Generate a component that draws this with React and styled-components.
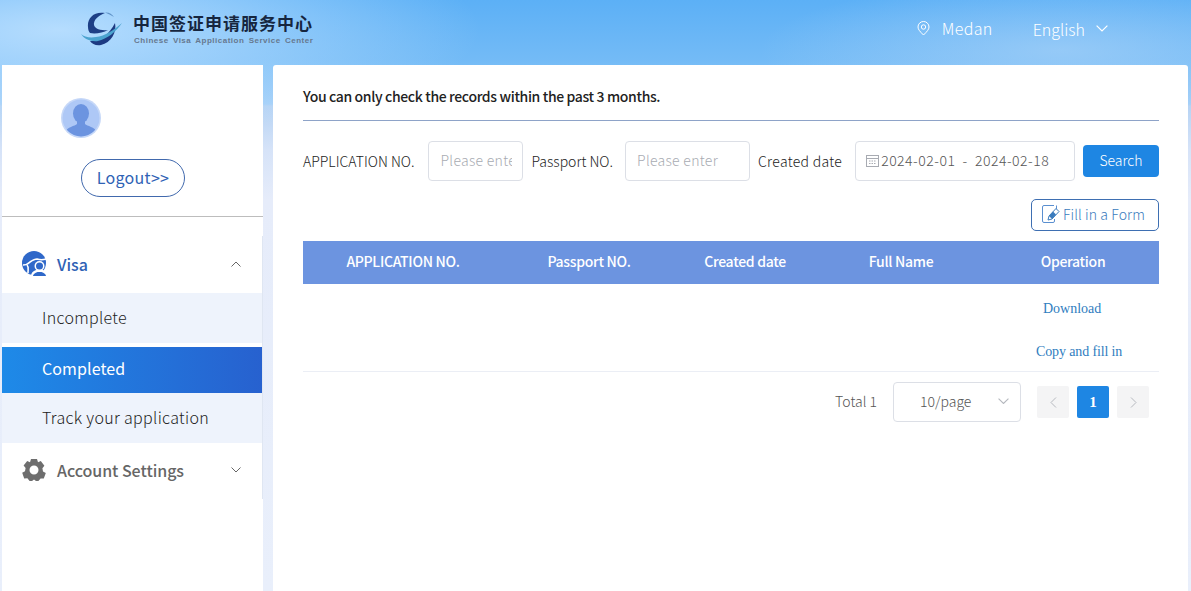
import React from 'react';
import styled, { createGlobalStyle } from 'styled-components';

const GlobalStyle = createGlobalStyle`
  html, body {
    margin: 0;
    height: 100%;
    overflow: hidden;
    font-family: "Noto Sans CJK SC", "Noto Sans", sans-serif;
  }
  * { box-sizing: border-box; }
`

const Page = styled.div`
  height: 591px;
  display: flex;
  flex-direction: column;
  background:
    radial-gradient(ellipse 300px 70px at 1060px 50px, rgba(180, 215, 248, 0.55), transparent),
    radial-gradient(ellipse 420px 110px at 60px 30px, rgba(190, 225, 255, 0.9), transparent),
    linear-gradient(180deg, #5cb0f6 0, #74bbf6 62px, #a4cff8 104px, #b6d3f4 106px, #d6e3f8 150px, #e6ecfa 200px, #e9effb 100%);
`
const Header = styled.header`
  height: 65px;
  flex: none;
  display: flex;
  align-items: center;
  justify-content: space-between;
  padding: 0 83px 7px 81px;
`
const Logo = styled.div`
  display: flex;
  align-items: center;
  gap: 10px;
`
const LogoText = styled.div`
  display: flex;
  flex-direction: column;
  margin-top: -1px;
`
const LogoTitle = styled.div`
  font-size: 17px;
  line-height: 24px;
  font-weight: 700;
  letter-spacing: 1px;
  color: #16263f;
  white-space: nowrap;
`
const LogoSub = styled.div`
  font-family: "Liberation Sans", sans-serif;
  font-size: 8px;
  line-height: 11px;
  font-weight: 700;
  letter-spacing: 0.5px;
  word-spacing: 1.6px;
  margin-left: 1px;
  color: #66788f;
  white-space: nowrap;
`
const HeaderRight = styled.div`
  display: flex;
  align-items: center;
  color: #fff;
  font-size: 16px;
  font-weight: 300;
`
const City = styled.div`
  display: flex;
  align-items: center;
  gap: 12px;
  margin-right: 40px;
  letter-spacing: 0.35px;
  margin-top: -2px;
`
const Lang = styled.div`
  display: flex;
  align-items: center;
  gap: 11px;
`
const Body = styled.div`
  flex: 1;
  display: flex;
  min-height: 0;
  padding: 0 3px 0 2px;
  gap: 10px;
`
const Sidebar = styled.aside`
  width: 261px;
  flex: none;
  background: #fff;
`
const Profile = styled.div`
  height: 152px;
  border-bottom: 1px solid #bdbdbd;
  padding: 33px 0 0 59px;
`
const Avatar = styled.div`
  width: 40px;
  height: 40px;
`
const LogoutButton = styled.button`
  display: block;
  width: 104px;
  height: 38px;
  margin: 21px 0 0 20px;
  padding: 0 0 2px;
  background: #fff;
  border: 1px solid #4169ad;
  border-radius: 19px;
  color: #2f62b5;
  font-family: inherit;
  font-size: 16px;
  font-weight: 400;
  letter-spacing: 0.3px;
`
const Menu = styled.nav`
  margin-top: 19px;
  height: 263px;
  border-right: 1px solid #dfe6f2;
`
const MenuHead = styled.div`
  height: ${p => p.$height}px;
  display: flex;
  align-items: center;
  padding: 0 21px 2px 20px;
  gap: 10px;
  color: ${p => p.$color};
  font-size: 16px;
  font-weight: 500;
  letter-spacing: -0.05px;
`
const MenuLabel = styled.span`
  flex: 1;
`
const SubMenu = styled.div`
  display: flex;
  flex-direction: column;
`
const SubItem = styled.div`
  height: ${p => p.$height}px;
  margin-top: ${p => p.$gap || 0}px;
  padding: 0 0 ${p => (p.$active ? 4 : 2)}px 40px;
  display: flex;
  align-items: center;
  font-size: 16px;
  letter-spacing: ${p => (p.$active ? 0.1 : 0.32)}px;
  font-weight: ${p => (p.$active ? 400 : 300)};
  color: ${p => (p.$active ? '#fff' : '#222')};
  background: ${p => (p.$active ? 'linear-gradient(90deg, #1e8ae8, #2761cf)' : '#eef3fc')};
`
const Main = styled.main`
  flex: 1;
  min-width: 0;
  background: #fff;
  border-radius: 3px 3px 0 0;
  padding: 0 29px 0 30px;
`
const Notice = styled.div`
  height: 56px;
  border-bottom: 1px solid #8ea3c8;
  display: flex;
  align-items: center;
  padding-top: 6px;
  font-size: 14px;
  font-weight: 500;
  color: #222;
  letter-spacing: -0.36px;
`
const SearchRow = styled.div`
  margin-top: 20px;
  height: 40px;
  display: flex;
  align-items: center;
`
const FieldLabel = styled.label`
  font-size: 14px;
  font-weight: 300;
  color: #222;
  white-space: nowrap;
  margin-right: ${p => p.$gap}px;
  letter-spacing: ${p => p.$spacing || 0}px;
`
const TextInput = styled.input`
  width: ${p => p.$width}px;
  height: 40px;
  margin-right: ${p => p.$gap}px;
  padding: 0 10px 2px 11px;
  border: 1px solid #dcdfe6;
  border-radius: 4px;
  outline: none;
  font-family: inherit;
  font-size: 14px;
  font-weight: 300;
  letter-spacing: 0.3px;
  &::placeholder { color: #a8abb2; opacity: 1; }
`
const DateInput = styled.div`
  width: 220px;
  height: 40px;
  margin-right: 8px;
  padding: 0 0 2px 10px;
  border: 1px solid #dcdfe6;
  border-radius: 4px;
  display: flex;
  align-items: center;
  gap: 2px;
  font-size: 14px;
  font-weight: 300;
  color: #555;
  letter-spacing: 0.5px;
  white-space: pre;
`
const SearchButton = styled.button`
  width: 76px;
  height: 32px;
  padding: 0 0 2px;
  border: 0;
  border-radius: 4px;
  background: #1e86e3;
  color: #fff;
  font-family: inherit;
  font-size: 14px;
  font-weight: 300;
`
const FormRow = styled.div`
  margin-top: 18px;
  display: flex;
  justify-content: flex-end;
`
const FillButton = styled.button`
  width: 128px;
  height: 32px;
  padding: 0 3px 3px 0;
  display: flex;
  align-items: center;
  justify-content: center;
  gap: 3px;
  background: #fff;
  border: 1px solid #3e6fb2;
  border-radius: 5px;
  color: #3a7bbd;
  font-family: inherit;
  font-size: 14px;
  font-weight: 300;
  letter-spacing: 0.1px;
`
const Row = styled.div`
  display: grid;
  grid-template-columns: 200px 172px 140px 172px 172px;
`
const TableHead = styled(Row)`
  margin-top: 10px;
  height: 43px;
  align-items: center;
  background: #6c94e0;
  color: #fff;
  font-size: 14px;
  font-weight: 500;
  letter-spacing: -0.3px;
  text-align: center;
  padding-bottom: 4px;
`
const TableRow = styled(Row)`
  height: 88px;
  border-bottom: 1px solid #ebeef5;
`
const Operation = styled.div`
  grid-column: 5;
  display: flex;
  flex-direction: column;
`
const OpLink = styled.a`
  font-family: "Liberation Serif", serif;
  font-size: 14px;
  line-height: 18px;
  letter-spacing: ${p => p.$spacing || 0}px;
  color: #2f7dc0;
  white-space: nowrap;
  margin-top: ${p => p.$top}px;
  margin-left: ${p => p.$left}px;
`
const Pager = styled.div`
  margin-top: 10px;
  padding-right: 10px;
  display: flex;
  align-items: center;
  justify-content: flex-end;
`
const Total = styled.span`
  font-size: 14px;
  font-weight: 300;
  color: #555;
  margin-right: 16px;
  padding-bottom: 2px;
`
const PageSize = styled.div`
  width: 128px;
  height: 40px;
  margin-right: 16px;
  padding: 0 11px 2px 26px;
  border: 1px solid #dcdfe6;
  border-radius: 4px;
  display: flex;
  align-items: center;
  justify-content: space-between;
  font-size: 14px;
  font-weight: 300;
  color: #555;
`
const PageButton = styled.button`
  width: 32px;
  height: 32px;
  margin-left: ${p => p.$gap || 0}px;
  padding: 0;
  border: 0;
  border-radius: 2px;
  display: flex;
  align-items: center;
  justify-content: center;
  background: ${p => (p.$active ? '#1e86e3' : '#f4f4f5')};
  color: #fff;
  font-family: "Liberation Serif", serif;
  font-size: 15px;
  font-weight: 700;
`

const Chevron = ({ up, size = 10, color = '#666' }) => (
  <svg width={size} height={size * 0.6} viewBox="0 0 10 6" fill="none" stroke={color} strokeWidth="1">
    <path d={up ? 'M0.5 5.5L5 1l4.5 4.5' : 'M0.5 0.5L5 5l4.5-4.5'} />
  </svg>
)

const LogoMark = () => (
  <svg width="42" height="34" viewBox="0 0 42 34">
    <path d="M24 1C13-1 6 6 7 15c0 3 1 5 2 6 5 1 13 0 18-3-9 1-15-2-14-7 1-5 6-8 11-10z" fill="#1d3f86" />
    <path d="M34 11c2 9-4 20-14 22-5 1-9-1-11-4 9 1 19-6 25-18z" fill="#1d3a82" />
    <path d="M0 22c3 5 10 8 17 7 9-2 18-9 24-18-8 7-17 13-26 14-6 1-12 0-15-3z" fill="#4ba3cf" />
    <path d="M24 .5c4-.5 7 1.500 9 4.500-3-2-6-3-9-4.500z" fill="#5f93c8" />
  </svg>
)

const AvatarIcon = () => (
  <svg width="40" height="40" viewBox="0 0 40 40">
    <defs>
      <clipPath id="avatarClip"><circle cx="20" cy="20" r="18.5" /></clipPath>
    </defs>
    <circle cx="20" cy="20" r="20" fill="#c6d8f8" />
    <circle cx="20" cy="20" r="18.5" fill="#aec8f6" />
    <g clipPath="url(#avatarClip)" fill="#6c94e0">
      <ellipse cx="20" cy="15.5" rx="8" ry="9.5" />
      <path d="M16 22h8v4c2 2 10 3 12 8v6H4v-6c2-5 10-6 12-8z" />
    </g>
  </svg>
)

const VisaIcon = () => (
  <svg width="25" height="25" viewBox="0 0 25 25">
    <circle cx="12" cy="12" r="12" fill="#2f68c9" />
    <path d="M1 14c3 0 5-1 7-3 3-2 5-3 7-3 3 1 6 1 9 0" fill="none" stroke="#fff" strokeWidth="1.600" />
    <path d="M5 14c2 2 1 4 1 8" fill="none" stroke="#fff" strokeWidth="1.600" />
    <circle cx="17.500" cy="15" r="5" fill="#fff" />
    <path d="M9 25c0-3 2-5 5-6h7c2 1 4 3 4 6z" fill="#fff" />
    <circle cx="17.500" cy="15" r="3.500" fill="#2f68c9" />
    <path d="M11 25c0-2 2-3 4.500-4h4c2.500 1 4.500 2 4.500 4z" fill="#2f68c9" />
  </svg>
)

const GearIcon = () => (
  <svg width="25" height="24" viewBox="0 0 25 24">
    <path
      fillRule="evenodd"
      fill="#6e6e6e"
      d="M9 1h6l1 3.200 2.800-1.200 3.600 4.800-2 2.400.6 3.200 2.800 1.600-2 5.600-3.200-.2L16.400 23H14l-2-1.600L10 23H7.600l-2.200-2.800-3.200.2-2-5.600L3 13.200l.6-3.200-2-2.400L5.200 3 8 4.200zM12 7.500a4.500 4.500 0 1 0 0 9 4.500 4.500 0 0 0 0-9z"
    />
  </svg>
)

const PinIcon = () => (
  <svg width="13" height="15" viewBox="0 0 13 15" fill="none" stroke="#fff" strokeWidth="1">
    <path d="M6.500 14C3 10.500 1 8.500 1 6a5.500 5.500 0 0 1 11 0c0 2.500-2 4.500-5.500 8z" />
    <circle cx="6.500" cy="6" r="2.200" />
  </svg>
)

const CalendarIcon = () => (
  <svg width="13" height="13" viewBox="0 0 13 13" fill="none" stroke="#a8abb2" strokeWidth="1">
    <rect x="0.500" y="1.500" width="12" height="11" />
    <path d="M0.500 4.500h12" />
    <path d="M3 7h7M3 9.500h7" strokeDasharray="1.500 1" />
  </svg>
)

const EditIcon = () => (
  <svg width="18" height="18" viewBox="0 0 18 18" fill="none" stroke="#5a8fd0" strokeWidth="1">
    <path d="M12 .5H2a1.500 1.500 0 0 0-1.500 1.500v14A1.500 1.500 0 0 0 2 17.500h9a1.500 1.500 0 0 0 1.500-1.500v-2" />
    <path d="M14.500 .5v5" />
    <path d="M6 15l1-4 7-7.500 3 3-7 7.500z" fill="#fff" stroke="#3a7bbd" />
    <path d="M7 11l3 3 4-4.500-3-3z" fill="#3a7bbd" stroke="none" />
  </svg>
)

export default function App() {
  return (
    <Page>
      <GlobalStyle />
      <Header>
        <Logo>
          <LogoMark />
          <LogoText>
            <LogoTitle>中国签证申请服务中心</LogoTitle>
            <LogoSub>Chinese Visa Application Service Center</LogoSub>
          </LogoText>
        </Logo>
        <HeaderRight>
          <City><PinIcon />Medan</City>
          <Lang>English <Chevron size={12} color="#fff" /></Lang>
        </HeaderRight>
      </Header>
      <Body>
        <Sidebar>
          <Profile>
            <Avatar><AvatarIcon /></Avatar>
            <LogoutButton>Logout&gt;&gt;</LogoutButton>
          </Profile>
          <Menu>
            <MenuHead $height={57} $color="#2f62b5">
              <VisaIcon />
              <MenuLabel>Visa</MenuLabel>
              <Chevron up />
            </MenuHead>
            <SubMenu>
              <SubItem $height={50}>Incomplete</SubItem>
              <SubItem $height={46} $gap={4} $active>Completed</SubItem>
              <SubItem $height={50}>Track your application</SubItem>
            </SubMenu>
            <MenuHead $height={56} $color="#666">
              <GearIcon />
              <MenuLabel>Account Settings</MenuLabel>
              <Chevron />
            </MenuHead>
          </Menu>
        </Sidebar>
        <Main>
          <Notice>You can only check the records within the past 3 months.</Notice>
          <SearchRow>
            <FieldLabel $gap={14}>APPLICATION NO.</FieldLabel>
            <TextInput $width={95} $gap={8} placeholder="Please enter" />
            <FieldLabel $gap={12}>Passport NO.</FieldLabel>
            <TextInput $width={125} $gap={8} placeholder="Please enter" />
            <FieldLabel $gap={13} $spacing={0.3}>Created date</FieldLabel>
            <DateInput><CalendarIcon />2024-02-01  -  2024-02-18</DateInput>
            <SearchButton>Search</SearchButton>
          </SearchRow>
          <FormRow>
            <FillButton><EditIcon />Fill in a Form</FillButton>
          </FormRow>
          <TableHead>
            <div>APPLICATION NO.</div>
            <div>Passport NO.</div>
            <div>Created date</div>
            <div>Full Name</div>
            <div>Operation</div>
          </TableHead>
          <TableRow>
            <Operation>
              <OpLink $top={16} $left={56}>Download</OpLink>
              <OpLink $top={25} $left={49} $spacing={-0.13}>Copy and fill in</OpLink>
            </Operation>
          </TableRow>
          <Pager>
            <Total>Total 1</Total>
            <PageSize>10/page <Chevron size={11} color="#b5b8be" /></PageSize>
            <PageButton><svg width="7" height="11" viewBox="0 0 7 11" fill="none" stroke="#b5b8be"><path d="M6 .5 1 5.500l5 5" /></svg></PageButton>
            <PageButton $gap={8} $active>1</PageButton>
            <PageButton $gap={8}><svg width="7" height="11" viewBox="0 0 7 11" fill="none" stroke="#b5b8be"><path d="M1 .5l5 5-5 5" /></svg></PageButton>
          </Pager>
        </Main>
      </Body>
    </Page>
  );
}
